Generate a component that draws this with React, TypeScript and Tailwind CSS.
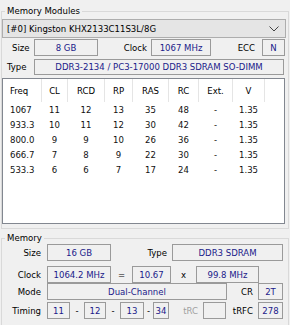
import React from "react";

const box = "h-full flex items-center justify-center border border-[#9a9a9a] text-[#1a1a8a] shrink-0";
const lbl = "shrink-0 text-black";

const cols = [
  "w-[39px] justify-start pl-[7px]",
  "w-[26px] justify-center",
  "w-[37px] justify-center",
  "w-[28px] justify-center",
  "w-[36px] justify-center",
  "w-[30px] justify-center",
  "w-[34px] justify-center",
  "w-[32px] justify-center",
];

const head = ["Freq", "CL", "RCD", "RP", "RAS", "RC", "Ext.", "V"];
const rows = [
  ["1067", "11", "12", "13", "35", "48", "-", "1.35"],
  ["933.3", "10", "11", "12", "30", "42", "-", "1.35"],
  ["800.0", "9", "9", "10", "26", "36", "-", "1.35"],
  ["666.7", "7", "8", "9", "22", "30", "-", "1.35"],
  ["533.3", "6", "6", "7", "17", "24", "-", "1.35"],
];

export default function App() {
  return (
    <div className="w-[290px] h-[325px] bg-[#f0f0f0] overflow-hidden flex flex-col font-['DejaVu_Sans_Condensed','DejaVu_Sans',sans-serif] text-[9.5px] leading-none text-black">
      {/* Memory Modules group */}
      <div className="relative mt-[11px] ml-[1px] w-[288px] h-[218px] shrink-0 border border-[#d9d9d9] flex flex-col">
        <div className="absolute left-[3px] top-[-6px] bg-[#f0f0f0] px-[2px] text-black">Memory Modules</div>
        <div className="mt-[7px] h-[19px] w-[284px] shrink-0 border border-[#adadad] bg-[#e5e5e5] flex items-center pl-[4px] pr-[6px]">
          <span className="flex-1">[#0] Kingston KHX2133C11S3L/8G</span>
          <svg width="10" height="6" viewBox="0 0 10 6" className="shrink-0">
            <polyline points="0.5,0.5 5,5 9.5,0.5" fill="none" stroke="#444" strokeWidth="1" />
          </svg>
        </div>
        <div className="mt-[1px] h-[17px] flex items-center shrink-0">
          <div className={`${lbl} w-[32px] pl-[10px]`}>Size</div>
          <div className={`${box} w-[64px]`}>8 GB</div>
          <div className={`${lbl} w-[53px] text-right pr-[4px]`}>Clock</div>
          <div className={`${box} w-[60px]`}>1067 MHz</div>
          <div className={`${lbl} w-[51px] text-right pr-[7px]`}>ECC</div>
          <div className={`${box} w-[23px]`}>N</div>
        </div>
        <div className="mt-[3px] h-[16px] flex items-center shrink-0">
          <div className={`${lbl} w-[32px] pl-[5px]`}>Type</div>
          <div className={`${box} w-[250px]`}>DDR3-2134 / PC3-17000 DDR3 SDRAM SO-DIMM</div>
        </div>
        <div className="mt-[3px] h-[146px] w-[283px] shrink-0 border border-[#828790] bg-white flex flex-col">
          <div className="h-[23px] flex shrink-0">
            {head.map((h, i) => (
              <div key={h} className={`${cols[i]} h-full flex items-center border-r border-[#e5e5e5]`}>
                {h}
              </div>
            ))}
          </div>
          {rows.map((r, ri) => (
            <div key={ri} className="h-[15px] flex shrink-0">
              {r.map((c, i) => (
                <div key={i} className={`${cols[i]} h-full flex items-center border-r border-transparent text-[#111]`}>
                  {c}
                </div>
              ))}
            </div>
          ))}
        </div>
      </div>

      {/* Memory group */}
      <div className="relative mt-[9px] ml-[1px] w-[288px] h-[100px] shrink-0 border border-[#d9d9d9] flex flex-col">
        <div className="absolute left-[3px] top-[-6px] bg-[#f0f0f0] px-[2px] text-black">Memory</div>
        <div className="mt-[5px] h-[17px] flex items-center shrink-0">
          <div className={`${lbl} w-[39px] text-right`}>Size</div>
          <div className={`${box} ml-[6px] w-[64px]`}>16 GB</div>
          <div className={`${lbl} w-[61px] text-right pr-[5px]`}>Type</div>
          <div className={`${box} w-[111px]`}>DDR3 SDRAM</div>
        </div>
        <div className="mt-[5px] h-[17px] flex items-center shrink-0">
          <div className={`${lbl} w-[39px] text-right`}>Clock</div>
          <div className={`${box} ml-[6px] w-[64px]`}>1064.2 MHz</div>
          <div className={`${lbl} w-[21px] text-center`}>=</div>
          <div className={`${box} w-[39px]`}>10.67</div>
          <div className={`${lbl} w-[25px] text-center text-[#1a1a8a]`}>x</div>
          <div className={`${box} w-[63px]`}>99.8 MHz</div>
        </div>
        <div className="mt-[0px] h-[17px] flex items-center shrink-0">
          <div className={`${lbl} w-[39px] text-right`}>Mode</div>
          <div className={`${box} ml-[6px] w-[180px]`}>Dual-Channel</div>
          <div className={`${lbl} w-[31px] text-right pr-[5px]`}>CR</div>
          <div className={`${box} w-[25px]`}>2T</div>
        </div>
        <div className="mt-[2px] h-[17px] flex items-center shrink-0">
          <div className={`${lbl} w-[39px] text-right`}>Timing</div>
          <div className={`${box} ml-[6px] w-[23px]`}>11</div>
          <div className={`${lbl} w-[14px] text-center`}>-</div>
          <div className={`${box} w-[22px]`}>12</div>
          <div className={`${lbl} w-[14px] text-center`}>-</div>
          <div className={`${box} w-[24px]`}>13</div>
          <div className={`${lbl} w-[9px] text-center`}>-</div>
          <div className={`${box} w-[16px]`}>34</div>
          <div className={`shrink-0 w-[34px] text-right pr-[5px] text-[#a0a0a0]`}>tRC</div>
          <div className={`${box} w-[23px]`}></div>
          <div className={`${lbl} w-[32px] text-right pr-[5px]`}>tRFC</div>
          <div className={`${box} w-[25px]`}>278</div>
        </div>
      </div>
    </div>
  );
}
